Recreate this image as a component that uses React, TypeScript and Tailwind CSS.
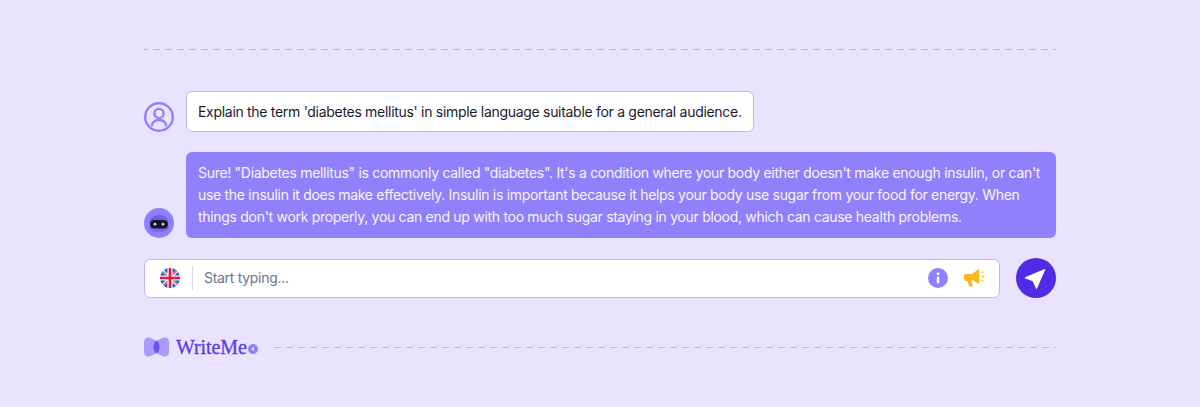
function UserIcon() {
	return (
		<svg width="30" height="30" viewBox="0 0 30 30" fill="none" stroke="#9180fb" strokeWidth="2.4" strokeLinecap="round">
			<circle cx="15" cy="15" r="13.8" />
			<circle cx="15" cy="11.5" r="4.6" />
			<path d="M7.8 23c1.2-3.4 3.9-5 7.2-5s6 1.600 7.200 5" />
		</svg>
	);
}

function BotAvatar() {
	return (
		<svg width="30" height="30" viewBox="0 0 30 30">
			<circle cx="15" cy="15" r="15" fill="#9180fb" />
			<path d="M5.500 15c0-5 4.300-8 9.500-8s9.500 3 9.500 8z" fill="#6f62e2" />
			<ellipse cx="15" cy="19.500" rx="10" ry="4.800" fill="#7568ea" />
			<rect x="6" y="12" width="18" height="8.500" rx="4.200" fill="#16162a" />
			<circle cx="11" cy="16.200" r="1.400" fill="#d5d6ea" />
			<circle cx="19" cy="16.200" r="1.400" fill="#d5d6ea" />
		</svg>
	);
}

function UkFlag() {
	return (
		<svg width="20" height="20" viewBox="0 0 512 512">
			<circle cx="256" cy="256" r="256" fill="#f4f4f4" />
			<path
				fill="#1f63c8"
				d="M52.92 100.142c-20.109 26.163-35.272 56.318-44.101 89.077h133.178L52.92 100.142zM503.181 189.219c-8.829-32.758-23.993-62.913-44.101-89.076l-89.075 89.076h133.176zM8.819 322.784c8.83 32.758 23.993 62.913 44.101 89.075l89.074-89.075H8.819zM411.858 52.921c-26.163-20.109-56.317-35.272-89.076-44.102v133.177l89.076-89.075zM100.142 459.079c26.163 20.109 56.318 35.272 89.076 44.102V370.005l-89.076 89.074zM189.217 8.819c-32.758 8.83-62.913 23.993-89.075 44.101l89.075 89.075V8.819zM322.783 503.181c32.758-8.83 62.913-23.993 89.075-44.101l-89.075-89.075v133.176zM370.005 322.784l89.075 89.076c20.108-26.162 35.272-56.318 44.101-89.076H370.005z"
			/>
			<path
				fill="#e3193f"
				d="M509.833 222.609H289.392V2.167A258.556 258.556 0 00256 0c-11.319 0-22.461.744-33.391 2.167v220.441H2.167A258.556 258.556 0 000 256c0 11.319.744 22.461 2.167 33.391h220.441v220.442a258.35 258.35 0 0066.783 0V289.392h220.442A258.533 258.533 0 00512 256c0-11.317-.744-22.461-2.167-33.391zM322.783 322.784L437.019 437.02a256.636 256.636 0 0015.048-16.435l-97.802-97.802h-31.482zM189.217 322.784h-.002L74.98 437.019a256.636 256.636 0 0016.435 15.048l97.802-97.804v-31.479zM189.217 189.219v-.002L74.981 74.98a256.636 256.636 0 00-15.048 16.435l97.803 97.803h31.481zM322.783 189.219L437.02 74.981a256.328 256.328 0 00-16.435-15.047l-97.802 97.803v31.482z"
			/>
		</svg>
	);
}

function InfoIcon() {
	return (
		<svg width="20" height="20" viewBox="0 0 20 20">
			<circle cx="10" cy="10" r="10" fill="#9180fb" />
			<circle cx="10" cy="5.800" r="1.400" fill="#fff" />
			<rect x="8.800" y="8.500" width="2.400" height="7" rx="1.100" fill="#fff" />
		</svg>
	);
}

function MegaphoneIcon() {
	return (
		<svg width="21" height="20" viewBox="0 0 21 20" fill="#fdb61c">
			<path d="M0 8C0 6.900.9 6 2 6h6l6-4.500c.6-.4 1.200-.1 1.200.6v12.800c0 .7-.6 1-1.200.6L8 11.500v1.500H2c-1.100 0-2-.9-2-2z" />
			<path d="M3.500 13h4l1 4.500c.1.500-.3 1-.8 1H6c-.5 0-.9-.3-1-.8z" />
			<path d="M18 4.500l1-.5M18.500 8.500h1.500M18 12.500l1 .5" stroke="#fdb61c" strokeWidth="1.300" strokeLinecap="round" />
		</svg>
	);
}

function SendIcon() {
	return (
		<svg width="24" height="24" viewBox="0 0 24 24" fill="#fff" stroke="#fff" strokeWidth="1" strokeLinejoin="round">
			<path d="M20.800 3.500L1 11.800l8 3 3.500 7.700z" />
		</svg>
	);
}

function LogoMark() {
	return (
		<svg width="25" height="20" viewBox="0 0 25 20">
			<path d="M0 5C0 1.500 2.500 0 5 .5c3 .6 5.500 3 7.500 3S17 1.100 20 .5C22.500 0 25 1.500 25 5v10c0 3.500-2.500 5-5 4.500-3-.6-5.500-3-7.500-3S8 18.900 5 19.500C2.500 20 0 18.500 0 15z" fill="#a99bfc" />
			<ellipse cx="12.500" cy="10" rx="3" ry="6" fill="#6b50ef" />
		</svg>
	);
}

export default function App() {
	return (
		<div className="bg-[#e9e3ff] min-h-screen font-['Inter',sans-serif] text-sm tracking-[-0.3px] px-[144px] pt-[49px]">
			<div className="h-px bg-[repeating-linear-gradient(90deg,#bdb1f8_0,#bdb1f8_4px,transparent_4px,transparent_9px,#bdb1f8_9px,#bdb1f8_12px)]" />

			<div className="flex items-end gap-3 mt-[41px]">
				<UserIcon />
				<div className="bg-white border border-[#bfb3fd] rounded-md px-[11px] h-[41px] flex items-center text-[#1a1a2e]">
					Explain the term 'diabetes mellitus' in simple language suitable for a general audience.
				</div>
			</div>

			<div className="flex items-end gap-3 mt-5">
				<div className="shrink-0">
					<BotAvatar />
				</div>
				<div className="bg-[#9180fb] rounded-md px-3 py-2.5 leading-[22px] text-[#f7f5ff]">
					Sure! "Diabetes mellitus" is commonly called "diabetes". It's a condition where your body either doesn't make enough insulin, or can't use the insulin it does make effectively. Insulin is important because it helps your body use sugar from your food for energy. When things don't work properly, you can end up with too much sugar staying in your blood, which can cause health problems.
				</div>
			</div>

			<div className="flex items-center gap-4 mt-5">
				<div className="flex-1 h-[39px] bg-white border border-[#bfb3fd] rounded-md flex items-center pl-[15px] pr-[14px]">
					<UkFlag />
					<div className="w-px h-6 bg-[#d9d9e3] ml-3 mr-[11px]" />
					<span className="flex-1 text-[#6e7191]">Start typing...</span>
					<InfoIcon />
					<div className="ml-4">
						<MegaphoneIcon />
					</div>
				</div>
				<div className="w-10 h-10 rounded-full bg-[#4f2ce6] flex items-center justify-center">
					<SendIcon />
				</div>
			</div>

			<div className="flex items-center mt-[39px]">
				<LogoMark />
				<span className="ml-[7px] font-['Liberation_Serif',serif] text-xl tracking-[-0.1px] [-webkit-text-stroke:0.3px_#5a3be6] text-[#5a3be6] leading-5">WriteMe</span>
				<div className="ml-px mt-1 w-[10px] h-[10px] rounded-full bg-[#9180fb] flex items-center justify-center">
					<div className="w-0 h-0 border-y-[2.5px] border-y-transparent border-r-[3px] border-r-[#e9e3ff]" />
				</div>
				<div className="flex-1 ml-4 h-px bg-[repeating-linear-gradient(90deg,#bdb1f8_0,#bdb1f8_7px,transparent_7px,transparent_12px)]" />
			</div>
		</div>
	);
}
